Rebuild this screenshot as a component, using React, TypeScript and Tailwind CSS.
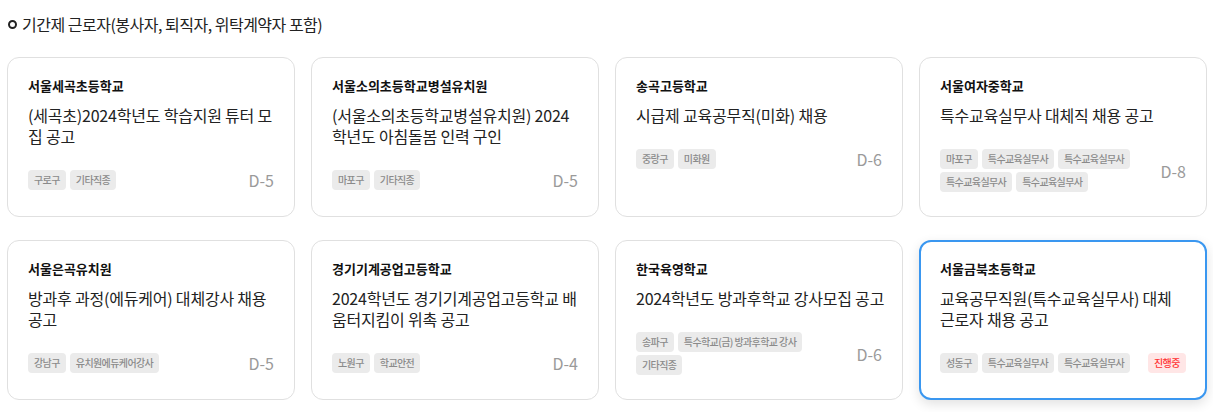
const FONT = { fontFamily: '"Noto Sans CJK KR", "Noto Sans", sans-serif' };

type Job = {
  school: string;
  title: string[];
  tags: string[];
  dday?: string;
  active?: boolean;
};

const jobs: Job[] = [
  {
    school: "서울세곡초등학교",
    title: ["(세곡초)2024학년도 학습지원 튜터 모", "집 공고"],
    tags: ["구로구", "기타직종"],
    dday: "D-5",
  },
  {
    school: "서울소의초등학교병설유치원",
    title: ["(서울소의초등학교병설유치원) 2024", "학년도 아침돌봄 인력 구인"],
    tags: ["마포구", "기타직종"],
    dday: "D-5",
  },
  {
    school: "송곡고등학교",
    title: ["시급제 교육공무직(미화) 채용"],
    tags: ["중랑구", "미화원"],
    dday: "D-6",
  },
  {
    school: "서울여자중학교",
    title: ["특수교육실무사 대체직 채용 공고"],
    tags: ["마포구", "특수교육실무사", "특수교육실무사", "특수교육실무사", "특수교육실무사"],
    dday: "D-8",
  },
  {
    school: "서울은곡유치원",
    title: ["방과후 과정(에듀케어) 대체강사 채용", "공고"],
    tags: ["강남구", "유치원에듀케어강사"],
    dday: "D-5",
  },
  {
    school: "경기기계공업고등학교",
    title: ["2024학년도 경기기계공업고등학교 배", "움터지킴이 위촉 공고"],
    tags: ["노원구", "학교안전"],
    dday: "D-4",
  },
  {
    school: "한국육영학교",
    title: ["2024학년도 방과후학교 강사모집 공고"],
    tags: ["송파구", "특수학교(금) 방과후학교 강사", "기타직종"],
    dday: "D-6",
  },
  {
    school: "서울금북초등학교",
    title: ["교육공무직원(특수교육실무사) 대체", "근로자 채용 공고"],
    tags: ["성동구", "특수교육실무사", "특수교육실무사"],
    active: true,
  },
];

function JobCard({ job }: { job: Job }) {
  return (
    <div
      className={
        job.active
          ? "flex flex-col rounded-xl border-2 border-[#3a97f0] bg-white px-[19px] pt-[18px] pb-[23px] shadow-[0_4px_12px_rgba(0,0,0,0.12)]"
          : "flex flex-col rounded-xl border border-[#e0e0e0] bg-white px-5 pt-[19px] pb-6"
      }
    >
      <div className="text-[13px] font-bold leading-[18px] text-[#111]">{job.school}</div>
      <div className="mt-[10px] text-[16px] leading-[21px] tracking-[-0.2px] text-[#222]">
        {job.title.map((line, i) => (
          <div key={i} className="whitespace-nowrap">
            {line}
          </div>
        ))}
      </div>
      <div className="mt-[23px] flex items-center justify-between gap-3">
        <div className="flex flex-1 flex-wrap gap-x-1 gap-y-[3px]">
          {job.tags.map((t, i) => (
            <span
              key={i}
              className="whitespace-pre rounded-[4px] bg-[#ebebeb] px-[6px] text-[10px] font-medium leading-[20px] tracking-[-0.6px] text-[#8a8a8a]"
            >
              {t}
            </span>
          ))}
        </div>
        {job.active ? (
          <span className="shrink-0 rounded-[4px] bg-[#ffe6e6] px-[6px] text-[10px] font-medium leading-[20px] tracking-[-0.5px] text-[#ff3333]">
            진행중
          </span>
        ) : (
          <span className="shrink-0 text-[16px] leading-[20px] text-[#9a9a9a]">{job.dday}</span>
        )}
      </div>
    </div>
  );
}

export default function App() {
  return (
    <div className="min-h-[412px] w-[1213px] bg-white" style={FONT}>
      <div className="flex items-center gap-[5px] pl-2 pt-[14px]">
        <span className="h-[9px] w-[9px] rounded-full border-2 border-[#222]" />
        <span className="text-[16px] leading-[20px] tracking-[-0.5px] text-[#222]">
          기간제 근로자(봉사자, 퇴직자, 위탁계약자 포함)
        </span>
      </div>
      <div className="mt-[23px] grid grid-cols-4 gap-x-4 gap-y-[23px] pl-[7px] pr-[6px]">
        {jobs.map((job, i) => (
          <JobCard key={i} job={job} />
        ))}
      </div>
    </div>
  );
}
